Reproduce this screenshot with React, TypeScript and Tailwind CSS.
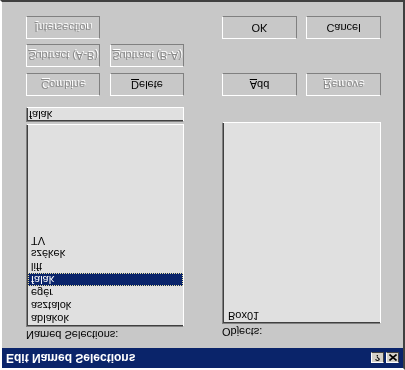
import React from 'react';

const font = { fontFamily: '"Liberation Sans", Arial, sans-serif' };

const names = ['ablakok', 'asztalok', 'egér', 'falak', 'lift', 'székek', 'TV'];

// raised 3d button, with mnemonic letter underlined
const Btn: React.FC<{ label: string; u?: number; disabled?: boolean; w?: string }> = ({ label, u = -1, disabled, w = 'w-[74px]' }) => (
  <div
    className={`${w} h-[23px] flex items-center justify-center border border-t-white border-l-white border-b-[#808080] border-r-[#808080] text-[11px] leading-none ${
      disabled ? 'text-[#8a8a8a] [text-shadow:1px_1px_0_#ffffff]' : 'text-black'
    }`}
  >
    {u < 0 ? (
      label
    ) : (
      <span>
        {label.slice(0, u)}
        <span className="underline underline-offset-1">{label[u]}</span>
        {label.slice(u + 1)}
      </span>
    )}
  </div>
);

export default function App() {
  return (
    <div className="w-[405px] h-[370px] -scale-y-100" style={font}>
      <div className="w-full h-full flex flex-col bg-[#c8c8c8] border-2 border-t-white border-l-white border-b-[#404040] border-r-[#404040]">
        {/* title bar */}
        <div className="h-[20px] bg-[#0a246a] flex items-center pl-[4px] pr-[4px]">
          <span className="flex-1 text-white font-bold text-[12px] leading-none">Edit Named Selections</span>
          <div className="flex gap-[2px]">
            <div className="w-[13px] h-[11px] bg-[#d4d0c8] border border-t-white border-l-white border-b-[#404040] border-r-[#404040] flex items-center justify-center text-[9px] font-bold leading-none text-black">
              ?
            </div>
            <div className="w-[13px] h-[11px] bg-[#d4d0c8] border border-t-white border-l-white border-b-[#404040] border-r-[#404040] flex items-center justify-center">
              <svg width="8" height="7" viewBox="0 0 8 7">
                <path d="M0.5 0.5L7.5 6.5M7.5 0.5L0.5 6.5" stroke="#000" strokeWidth="1.6" />
              </svg>
            </div>
          </div>
        </div>

        {/* client */}
        <div className="flex-1 flex pl-[24px] text-[11px] text-black">
          <div className="w-[158px] flex flex-col">
            <div className="h-[21px] pt-[7px] leading-[13px]">Named Selections:</div>
            <div className="h-[203px] bg-[#e0e0e0] border border-t-[#808080] border-l-[#808080] border-b-white border-r-white shadow-[inset_1px_1px_0_#404040] pt-[1px] pl-[1px]">
              {names.map((n) => (
                <div
                  key={n}
                  className={`h-[13px] leading-[11px] pl-[2px] ${
                    n === 'falak' ? 'bg-[#0a246a] text-white border border-dotted border-[#e8e0a0]' : 'border border-transparent'
                  }`}
                >
                  {n}
                </div>
              ))}
            </div>
            <div className="mt-[2px] h-[15px] bg-[#e0e0e0] border border-t-[#808080] border-l-[#808080] border-b-white border-r-white shadow-[inset_1px_1px_0_#404040] pl-[2px] leading-[13px]">
              falak
            </div>
            <div className="mt-[11px] flex gap-[10px]">
              <Btn label="Combine" u={0} disabled />
              <Btn label="Delete" u={0} />
            </div>
            <div className="mt-[6px] flex gap-[10px]">
              <Btn label="Subtract (A-B)" u={0} disabled />
              <Btn label="Subtract (B-A)" u={0} disabled />
            </div>
            <div className="mt-[5px] flex">
              <Btn label="Intersection" u={0} disabled />
            </div>
          </div>

          <div className="ml-[38px] w-[159px] flex flex-col">
            <div className="h-[24px] pt-[10px] leading-[13px]">Objects:</div>
            <div className="h-[202px] bg-[#e0e0e0] border border-t-[#808080] border-l-[#808080] border-b-white border-r-white shadow-[inset_1px_1px_0_#404040] pt-[1px] pl-[1px]">
              <div className="h-[13px] leading-[11px] pl-[3px] border border-transparent">Box01</div>
            </div>
            <div className="mt-[26px] flex gap-[9px]">
              <Btn label="Add" u={0} w="w-[75px]" />
              <Btn label="Remove" u={0} disabled w="w-[75px]" />
            </div>
            <div className="mt-[34px] flex gap-[9px]">
              <Btn label="OK" w="w-[75px]" />
              <Btn label="Cancel" w="w-[75px]" />
            </div>
          </div>
        </div>
      </div>
    </div>
  );
}
